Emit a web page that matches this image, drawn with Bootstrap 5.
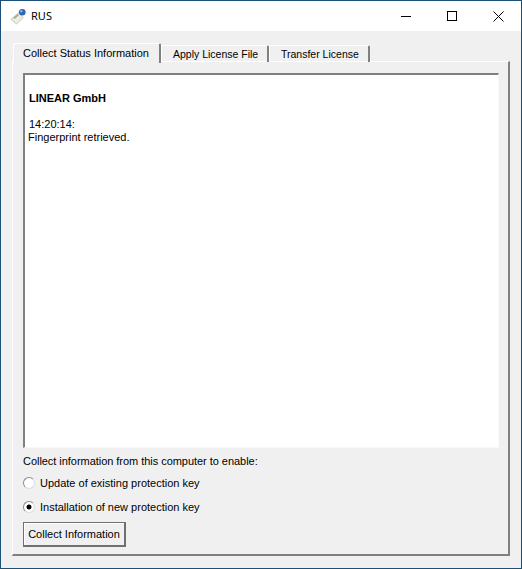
<!DOCTYPE html>
<html lang="en"><head><meta charset="utf-8"><title>RUS</title>
<link href="https://cdn.jsdelivr.net/npm/bootstrap@5.3.0/dist/css/bootstrap.min.css" rel="stylesheet">
<style>
html,body{height:569px;margin:0;overflow:hidden;background:#f0f0f0}
body{font-family:"Liberation Sans",Arial,sans-serif;font-size:11px;line-height:13px;color:#000}
.win{width:522px;height:569px;border:1px solid #1b5078;background:#f0f0f0}
.titlebar{height:30px;background:#fff;padding-left:9px}
.titlebar .ttl{font-family:"Noto Sans",sans-serif;font-size:11px;margin-left:4px;margin-top:-2px}
.wbtns{margin-left:auto}
.wbtn{width:46px;height:30px}
.body-area{padding:12px 11px 0 11px}
.tabrow{height:19px;padding-left:1px;border:0;position:relative;z-index:1;margin-bottom:-1px;flex-wrap:nowrap}
.tabrow .nav-link{border:0;border-radius:0;padding:0;color:#000;font-size:11px;line-height:13px;background:transparent;white-space:nowrap}
.tabitem{border-top:1px solid #fff;border-right:2px solid #808080;border-left:1px solid #fff;border-top-right-radius:2px;border-top-left-radius:2px;height:17px;margin-top:2px;padding:2px 9px 0 11px}
.tabitem.on{height:20px;margin-top:0;background:#f0f0f0;padding:3px 9px 0 9px;width:148px}
.tabitem.t2{width:108px}
.tabitem.t2 .nav-link{font-size:10.5px}
.tabitem.t3{width:101px}
.tabitem.t3 .nav-link{font-size:10.5px}
.panel{width:498px;height:495px;border-top:1px solid #fff;border-left:1px solid #fff;border-right:2px solid #808080;border-bottom:2px solid #808080;padding:11px 10px 0 10px}
.logbox{width:476px;height:375px;background:#fff;border-top:2px solid #808080;border-left:2px solid #808080;border-right:1px solid #f8f8f8;border-bottom:1px solid #f8f8f8;padding:17px 3px 0 3px}
.logbox .co{font-weight:700;padding-left:1px;margin-bottom:13px}
.logbox .tm{padding-left:1px}
.lbl{margin-top:7px;letter-spacing:-.04px}
.opt{height:24px;gap:5px}
.opt.first{margin-top:3px}
.opt input{appearance:none;-webkit-appearance:none;width:12px;height:12px;margin:0;border-radius:50%;background:#fff;border:1px solid #8a8a8a;border-right-color:#dcdcdc;border-bottom-color:#dcdcdc;flex:none}
.opt input:checked{background:#fff radial-gradient(circle,#000 0,#000 2.2px,transparent 2.8px)}
.actbtn{width:103px;height:25px;margin-top:3px;padding:0;font-size:11px;line-height:13px;color:#000;background:#f0f0f0;border-radius:0;border:1px solid #707070;border-right-width:2px;border-bottom-width:2px;box-shadow:inset 1px 1px 0 #fff;display:block;white-space:nowrap}
</style></head>
<body>
<div class="win d-flex flex-column">
 <div class="titlebar d-flex align-items-center">
  <svg width="17" height="17" viewBox="0 0 18 18"><path d="M1 12 9 5l5 5-7 7z" fill="#ecece6" stroke="#c4c4bc"/><path d="M4 11 9 7" stroke="#8fb070" stroke-width="1.500"/><circle cx="13" cy="4.500" r="3.500" fill="#2f66b8"/><circle cx="12" cy="3.500" r="1.200" fill="#a8c8f0"/></svg>
  <span class="ttl">RUS</span>
  <div class="wbtns d-flex">
   <div class="wbtn d-flex align-items-center justify-content-center"><svg width="10" height="10" viewBox="0 0 10 10"><path d="M0 5.500h10" stroke="#000"/></svg></div>
   <div class="wbtn d-flex align-items-center justify-content-center"><svg width="10" height="10" viewBox="0 0 10 10"><rect x=".5" y=".5" width="9" height="9" fill="none" stroke="#000"/></svg></div>
   <div class="wbtn d-flex align-items-center justify-content-center"><svg width="11" height="11" viewBox="0 0 11 11"><path d="M.5.500l10 10M10.500.500l-10 10" stroke="#000" fill="none"/></svg></div>
  </div>
 </div>
 <div class="body-area">
  <ul class="nav tabrow">
   <li class="nav-item tabitem on"><a class="nav-link" href="#">Collect Status Information</a></li>
   <li class="nav-item tabitem t2"><a class="nav-link" href="#">Apply License File</a></li>
   <li class="nav-item tabitem t3"><a class="nav-link" href="#">Transfer License</a></li>
  </ul>
  <div class="panel">
   <div class="logbox">
    <div class="co">LINEAR GmbH</div>
    <div class="tm">14:20:14:</div>
    <div class="fp">Fingerprint retrieved.</div>
   </div>
   <div class="lbl">Collect information from this computer to enable:</div>
   <div class="opt first d-flex align-items-center"><input type="radio" name="k" id="a"><label for="a">Update of existing protection key</label></div>
   <div class="opt d-flex align-items-center"><input type="radio" name="k" id="b" checked><label for="b">Installation of new protection key</label></div>
   <button class="btn actbtn" type="button">Collect Information</button>
  </div>
 </div>
</div>
<script src="https://cdn.jsdelivr.net/npm/bootstrap@5.3.0/dist/js/bootstrap.bundle.min.js"></script>
</body></html>
